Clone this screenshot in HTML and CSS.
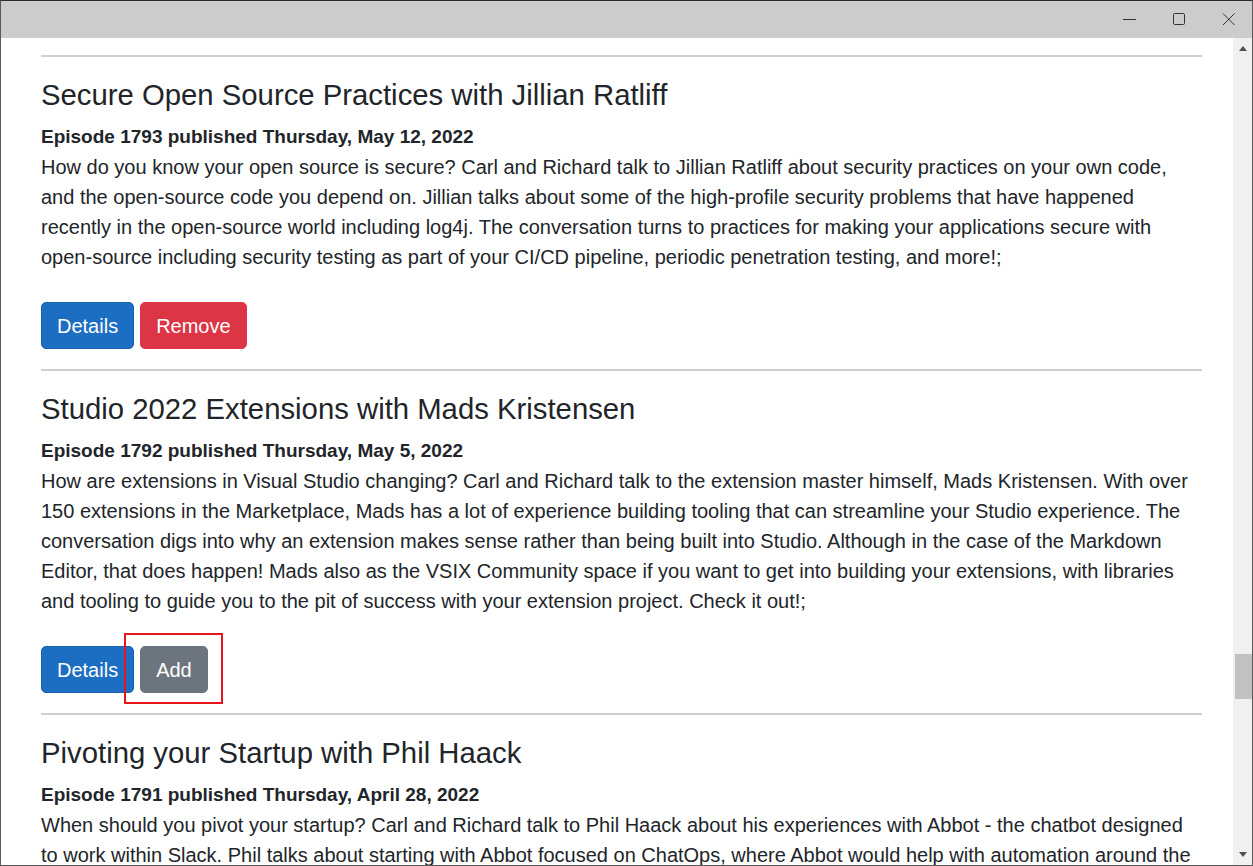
FILE: index.html
```html
<!DOCTYPE html>
<html>
<head>
<meta charset="utf-8">
<link rel="stylesheet" href="styles.css">
</head>
<body>
<div class="window">
  <div class="titlebar">
    <svg class="controls" width="150" height="36" viewBox="0 0 150 36">
      <line x1="21" y1="18.5" x2="34" y2="18.5" stroke="#333" stroke-width="1"/>
      <rect x="71.5" y="12.5" width="11" height="11" rx="1.2" fill="none" stroke="#333" stroke-width="1"/>
      <path d="M121 12.5 L132.5 24 M132.5 12.5 L121 24" stroke="#333" stroke-width="1" fill="none"/>
    </svg>
  </div>
  <div class="client">
    <div class="content">
      <hr class="first">
      <div class="episode">
        <h4 class="title">Secure Open Source Practices with Jillian Ratliff</h4>
        <div class="meta">Episode 1793 published Thursday, May 12, 2022</div>
        <p class="desc">How do you know your open source is secure? Carl and Richard talk to Jillian Ratliff about security practices on your own code, and the open-source code you depend on. Jillian talks about some of the high-profile security problems that have happened recently in the open-source world including log4j. The conversation turns to practices for making your applications secure with open-source including security testing as part of your CI/CD pipeline, periodic penetration testing, and more!;</p>
        <div class="actions">
          <button class="btn btn-primary">Details</button>
          <button class="btn btn-danger">Remove</button>
        </div>
      </div>
      <hr>
      <div class="episode">
        <h4 class="title">Studio 2022 Extensions with Mads Kristensen</h4>
        <div class="meta">Episode 1792 published Thursday, May 5, 2022</div>
        <p class="desc">How are extensions in Visual Studio changing? Carl and Richard talk to the extension master himself, Mads Kristensen. With over 150 extensions in the Marketplace, Mads has a lot of experience building tooling that can streamline your Studio experience. The conversation digs into why an extension makes sense rather than being built into Studio. Although in the case of the Markdown Editor, that does happen! Mads also as the VSIX Community space if you want to get into building your extensions, with libraries and tooling to guide you to the pit of success with your extension project. Check it out!;</p>
        <div class="actions">
          <button class="btn btn-primary">Details</button>
          <span class="highlight-wrap"><button class="btn btn-secondary">Add</button><span class="highlight"></span></span>
        </div>
      </div>
      <hr>
      <div class="episode">
        <h4 class="title">Pivoting your Startup with Phil Haack</h4>
        <div class="meta">Episode 1791 published Thursday, April 28, 2022</div>
        <p class="desc">When should you pivot your startup? Carl and Richard talk to Phil Haack about his experiences with Abbot - the chatbot designed to work within Slack. Phil talks about starting with Abbot focused on ChatOps, where Abbot would help with automation around the operations of a team, and how that changed into helping companies provide better customer service through Slack.;</p>
        <div class="actions">
          <button class="btn btn-primary">Details</button>
          <button class="btn btn-secondary">Add</button>
        </div>
      </div>
    </div>
    <div class="scrollbar">
      <div class="arrow up"></div>
      <div class="track"><div class="thumb"></div></div>
      <div class="arrow down"></div>
    </div>
  </div>
</div>
</body>
</html>
```
FILE: styles.css
```css
html, body {
  margin: 0;
  padding: 0;
  overflow: hidden;
  background: #fff;
}
.window {
  width: 1253px;
  height: 866px;
  box-sizing: border-box;
  border: 1px solid #5a5a5a;
  border-top-color: #2b2b2b;
  display: flex;
  flex-direction: column;
  font-family: "Liberation Sans", Arial, sans-serif;
  color: #212529;
}
.titlebar {
  height: 37px;
  flex: none;
  background: #cccccc;
  display: flex;
  justify-content: flex-end;
}
.controls {
  display: block;
}
.client {
  flex: 1;
  display: flex;
  min-height: 0;
}
.content {
  flex: 1;
  overflow: hidden;
  padding: 17px 31px 0 40px;
  font-size: 20px;
  line-height: 30px;
}
hr {
  border: 0;
  height: 2px;
  background: #cfcfcf;
  margin: 20px 0;
}
hr.first {
  margin-top: 0;
}
.title {
  font-size: 29.3px;
  font-weight: 400;
  line-height: 35px;
  margin: 0 0 10px;
}
.meta {
  font-weight: 700;
  font-size: 19px;
}
.desc {
  margin: 0 0 30px;
}
.actions {
  display: flex;
  gap: 6px;
}
.btn {
  font-family: inherit;
  font-size: 20px;
  line-height: 30px;
  padding: 7.5px 15px;
  border: 1px solid transparent;
  border-radius: 5px;
  color: #fff;
  cursor: pointer;
}
.btn-primary {
  background: #1b6ec2;
  border-color: #1861ac;
}
.btn-danger {
  background: #dc3545;
  border-color: #dc3545;
}
.btn-secondary {
  background: #6c757d;
  border-color: #6c757d;
}
.highlight-wrap {
  position: relative;
  display: inline-block;
}
.highlight {
  position: absolute;
  left: -16px;
  top: -13px;
  width: 95px;
  height: 67px;
  border: 2px solid #e8141c;
  pointer-events: none;
}
.scrollbar {
  width: 19px;
  flex: none;
  background: #f0f0f0;
  display: flex;
  flex-direction: column;
  box-sizing: border-box;
  padding-left: 2px;
}
.arrow {
  height: 19px;
  flex: none;
  position: relative;
}
.arrow.up::after, .arrow.down::after {
  content: "";
  position: absolute;
  left: 4px;
  width: 0;
  height: 0;
  border-left: 4.5px solid transparent;
  border-right: 4.5px solid transparent;
}
.arrow.up::after {
  top: 8px;
  border-bottom: 5px solid #505050;
}
.arrow.down::after {
  bottom: 8px;
  border-top: 5px solid #505050;
}
.track {
  flex: 1;
  position: relative;
}
.thumb {
  position: absolute;
  left: 0;
  right: 0;
  top: 597px;
  height: 45px;
  background: #c1c1c1;
}
```
